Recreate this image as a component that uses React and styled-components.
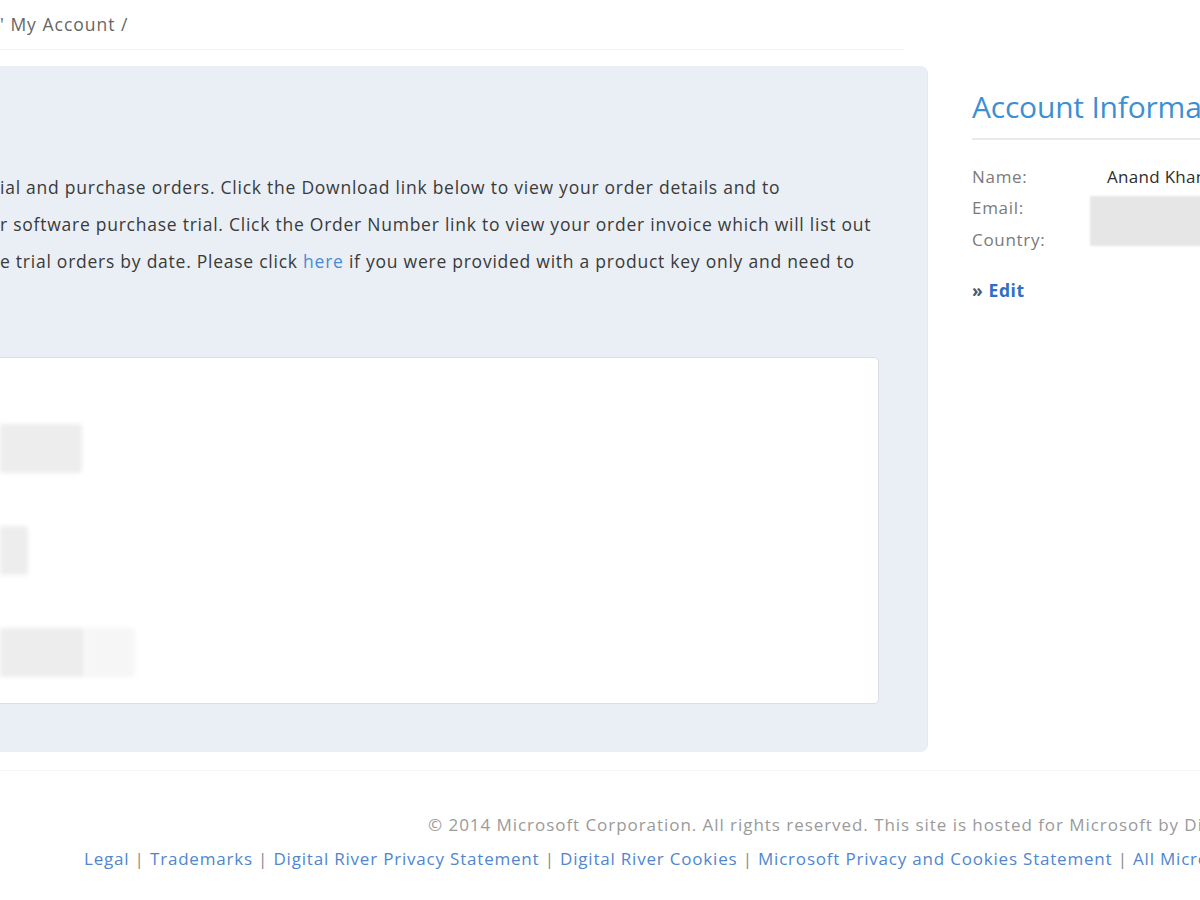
import React from 'react';
import styled, { createGlobalStyle } from 'styled-components';

const GlobalStyle = createGlobalStyle`
  html, body {
    margin: 0;
    padding: 0;
    background: #ffffff;
    overflow: hidden;
  }
  body {
    font-family: "Open Sans", "Liberation Sans", sans-serif;
    color: #333;
  }
`;

const Page = styled.div`
  width: 1200px;
  height: 900px;
  display: flex;
  flex-direction: column;
  overflow: hidden;
`;

const Main = styled.div`
  display: flex;
  gap: 44px;
  height: 770px;
`;

const LeftColumn = styled.div`
  width: 928px;
  flex-shrink: 0;
  display: flex;
  flex-direction: column;
`;

const Breadcrumb = styled.div`
  height: 50px;
  box-sizing: border-box;
  padding-top: 12px;
  font-size: 17.5px;
  letter-spacing: 1px;
  color: #666;
  border-bottom: 1px solid #f4f4f2;
  width: 905px;
`;

const Panel = styled.div`
  margin-top: 16px;
  height: 686px;
  box-sizing: border-box;
  background: #e9eff5;
  border-radius: 0 8px 8px 0;
  border-right: 1px solid #e3e9ef;
  padding: 103px 48px 47px 0;
  display: flex;
  flex-direction: column;
`;

const Intro = styled.p`
  margin: 0;
  font-size: 17.5px;
  letter-spacing: 0.75px;
  line-height: 37px;
  color: #3a3a3a;
  height: 188px;
`;

const Line = styled.span`
  display: block;
  white-space: nowrap;
`;

const Link = styled.a`
  color: #4a8ad6;
  text-decoration: none;
`;

const OrdersBox = styled.div`
  height: 347px;
  box-sizing: border-box;
  background: #fff;
  border: 1px solid #d9dee4;
  border-left: none;
  border-radius: 0 5px 5px 0;
  padding-top: 66px;
  display: flex;
  flex-direction: column;
  gap: 53px;
`;

const BlurRow = styled.div`
  display: flex;
  height: 49px;
`;

const BlurBlock = styled.div`
  width: ${p => p.w}px;
  height: 100%;
  background: ${p => (p.light ? '#f6f6f6' : '#ededed')};
  border-radius: 0 4px 4px 0;
  filter: blur(2px);
`;

const RightColumn = styled.div`
  flex: 1;
  padding-top: 86px;
  white-space: nowrap;
  overflow: hidden;
`;

const Title = styled.h2`
  margin: 0;
  font-family: "Open Sans", sans-serif;
  font-weight: 400;
  font-size: 30px;
  letter-spacing: -0.2px;
  color: #3d8fd2;
  padding-bottom: 11px;
  border-bottom: 2px solid #e8eaec;
  width: 300px;
`;

const InfoGrid = styled.div`
  display: grid;
  grid-template-columns: 118px 1fr;
  grid-template-rows: 31px 32px 33px;
  margin-top: 21px;
  position: relative;
`;

const Label = styled.div`
  font-size: 17px;
  letter-spacing: 0.7px;
  line-height: 31px;
  color: #7a7a7a;
`;

const Value = styled.div`
  font-size: 17px;
  letter-spacing: 0.3px;
  line-height: 31px;
  color: #2e2e2e;
  padding-left: 17px;
`;

const Redacted = styled.div`
  position: absolute;
  left: 118px;
  top: 35px;
  width: 200px;
  height: 50px;
  background: #e6e6e6;
  filter: blur(1px);
`;

const EditLink = styled.a`
  display: inline-block;
  margin-top: 21px;
  font-size: 17.5px;
  letter-spacing: 0.6px;
  font-weight: 700;
  color: #2f6fc4;
  text-decoration: none;
  &::before {
    content: '» ';
    color: #4a5a70;
  }
`;

const Footer = styled.div`
  border-top: 1px solid #f6f6f4;
  padding-top: 42px;
  display: flex;
  flex-direction: column;
  gap: 11px;
  font-size: 17px;
  white-space: nowrap;
`;

const Copyright = styled.div`
  padding-left: 428px;
  color: #9a9a9a;
  letter-spacing: 0.95px;
  line-height: 23px;
`;

const FooterLinks = styled.div`
  padding-left: 84px;
  color: #8a8a8a;
  letter-spacing: 0.8px;
  line-height: 23px;
`;

const FooterLink = styled.a`
  color: #4f86cf;
  text-decoration: none;
`;

const footerLinks = [
  'Legal',
  'Trademarks',
  'Digital River Privacy Statement',
  'Digital River Cookies',
  'Microsoft Privacy and Cookies Statement',
  'All Microsoft Sites',
];

export default function App() {
  return (
    <Page>
      <GlobalStyle />
      <Main>
        <LeftColumn>
          <Breadcrumb>' My Account /</Breadcrumb>
          <Panel>
            <Intro>
              <Line>ial and purchase orders. Click the Download link below to view your order details and to</Line>
              <Line>r software purchase trial. Click the Order Number link to view your order invoice which will list out</Line>
              <Line>
                e trial orders by date. Please click <Link href="#">here</Link> if you were provided with a product key only and need to
              </Line>
            </Intro>
            <OrdersBox>
              <BlurRow>
                <BlurBlock w={82} />
              </BlurRow>
              <BlurRow>
                <BlurBlock w={28} />
              </BlurRow>
              <BlurRow>
                <BlurBlock w={85} />
                <BlurBlock w={50} light />
              </BlurRow>
            </OrdersBox>
          </Panel>
        </LeftColumn>
        <RightColumn>
          <Title>Account Information</Title>
          <InfoGrid>
            <Label>Name:</Label>
            <Value>Anand Khanse</Value>
            <Label>Email:</Label>
            <div />
            <Label>Country:</Label>
            <div />
            <Redacted />
          </InfoGrid>
          <EditLink href="#">Edit</EditLink>
        </RightColumn>
      </Main>
      <Footer>
        <Copyright>© 2014 Microsoft Corporation. All rights reserved. This site is hosted for Microsoft by Digital River.</Copyright>
        <FooterLinks>
          {footerLinks.map((l, i) => (
            <React.Fragment key={l}>
              {i > 0 && ' | '}
              <FooterLink href="#">{l}</FooterLink>
            </React.Fragment>
          ))}
        </FooterLinks>
      </Footer>
    </Page>
  );
}
